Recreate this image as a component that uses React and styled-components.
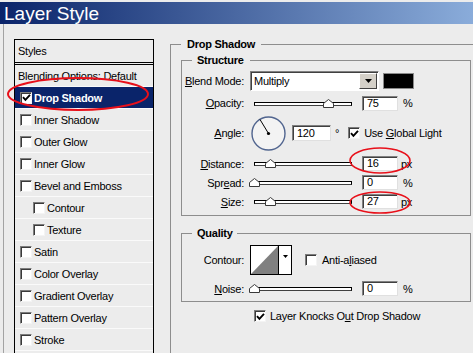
import React from "react";
import styled, { createGlobalStyle } from "styled-components";

const GlobalStyle = createGlobalStyle`
  html, body { margin: 0; padding: 0; background: #ececec; }
  body {
    font-family: "Liberation Sans", Arial, sans-serif;
    font-size: 11px;
    letter-spacing: -0.25px;
    color: #000;
  }
`;

const Window = styled.div`
  position: relative;
  width: 473px;
  height: 353px;
  overflow: hidden;
  padding-top: 2px;
  box-sizing: border-box;
  background: #ececec;
`;

const TitleBar = styled.div`
  height: 22px;
  padding-left: 4px;
  background: linear-gradient(90deg, #0a246a 0%, #8aacda 100%);
  color: #fff;
  font-size: 19px;
  letter-spacing: 0;
  line-height: 23px;
`;

const Body = styled.div`
  display: flex;
  align-items: flex-start;
  height: 329px;
`;

const Sidebar = styled.div`
  flex: none;
  height: 100%;
  box-sizing: border-box;
  margin-left: 3px;
  padding: 15px 0 0 10px;
  border-left: 1px solid #a3a3a3;
`;

const StyleList = styled.div`
  width: 140px;
  height: 360px;
  box-sizing: border-box;
  border: 1px solid #000;
`;

const ListHeader = styled.div`
  height: 22px;
  line-height: 22px;
  padding-left: 3px;
  border-bottom: 3px double #000;
`;

const ListRow = styled.div`
  display: flex;
  align-items: center;
  gap: 2px;
  height: 21px;
  border-bottom: 1px solid #fafafa;
  padding-left: ${(p) => p.$pad}px;
  background: ${(p) => (p.$selected ? "#0a246a" : "transparent")};
  color: ${(p) => (p.$selected ? "#fff" : "#000")};
  font-weight: ${(p) => (p.$selected ? "bold" : "normal")};
  white-space: nowrap;
`;

const Box = styled.span`
  flex: none;
  display: inline-flex;
  align-items: center;
  justify-content: center;
  width: 12px;
  height: 12px;
  box-sizing: border-box;
  background: #fff;
  border: 1px solid;
  border-color: #7c7c7c #f4f4f4 #f4f4f4 #7c7c7c;
  box-shadow: inset 1px 1px 0 #3a3a3a;
`;

const Panel = styled.div`
  flex: none;
  margin-left: 16px;
`;

const Group = styled.fieldset`
  margin: ${(p) => p.$mt || 0}px 0 0 0;
  min-width: 0;
  width: ${(p) => p.$w}px;
  height: ${(p) => (p.$h ? `${p.$h}px` : "auto")};
  box-sizing: border-box;
  padding: ${(p) => p.$pad};
  border: 1px solid #8d8d8d;
`;

const Legend = styled.legend`
  margin-left: ${(p) => p.$ml || 0}px;
  padding: 0 ${(p) => p.$pr}px 0 ${(p) => p.$pl}px;
  font-weight: bold;
  line-height: 13px;
`;

const Row = styled.div`
  display: flex;
  align-items: center;
  height: ${(p) => p.$h || 19}px;
  margin-top: ${(p) => p.$mt || 0}px;
  padding-left: ${(p) => p.$pl || 0}px;
  white-space: nowrap;
`;

const Label = styled.span`
  flex: none;
  width: 62px;
  margin-right: 6px;
  text-align: right;
`;

const Select = styled.div`
  flex: none;
  display: flex;
  align-items: center;
  width: 129px;
  height: 20px;
  box-sizing: border-box;
  background: #fff;
  border: 1px solid;
  border-color: #808080 #fff #fff #808080;
  box-shadow: inset 1px 1px 0 #404040;
  padding: 1px 1px 1px 3px;
`;

const SelectText = styled.span`
  flex: 1;
`;

const DropButton = styled.span`
  flex: none;
  display: flex;
  align-items: center;
  justify-content: center;
  width: 18px;
  height: 100%;
  box-sizing: border-box;
  background: #d4d0c8;
  border: 1px solid;
  border-color: #fff #404040 #404040 #fff;
`;

const Swatch = styled.span`
  flex: none;
  width: 31px;
  height: 16px;
  margin-left: 4px;
  box-sizing: border-box;
  background: #000;
  border: 1px solid #8a8a8a;
`;

const SliderWrap = styled.div`
  position: relative;
  flex: none;
  width: 98px;
  height: 9px;
  margin: 0 10px 0 4px;
`;

const Track = styled.div`
  margin-top: 3px;
  height: 2px;
  background: #fff;
  border: 1px solid #000;
  border-bottom-color: #404040;
`;

const Thumb = styled.svg`
  position: absolute;
  top: 0;
  display: block;
`;

const Field = styled.div`
  flex: none;
  width: ${(p) => p.$w || 36}px;
  height: ${(p) => p.$h || 15}px;
  box-sizing: border-box;
  line-height: ${(p) => (p.$h || 15) - 2}px;
  padding-left: 4px;
  background: #fff;
  border: 1px solid;
  border-color: #808080 #e0e0e0 #e0e0e0 #808080;
  box-shadow: inset 1px 1px 0 #404040;
`;

const Unit = styled.span`
  margin-left: ${(p) => p.$ml}px;
`;

const CheckLabel = styled.span`
  display: inline-flex;
  align-items: center;
  gap: ${(p) => p.$gap || 4}px;
  margin-left: ${(p) => p.$ml || 0}px;
`;

const Dial = styled.svg`
  flex: none;
  display: block;
  margin: 0 6px 0 1px;
`;

const ContourPicker = styled.div`
  flex: none;
  display: flex;
  width: 42px;
  height: 30px;
  box-sizing: border-box;
  border: 1px solid #000;
  background: #fff;
`;

const ContourCurve = styled.svg`
  display: block;
  border-right: 1px solid #000;
`;

const ContourArrow = styled.div`
  flex: 1;
  display: flex;
  justify-content: center;
  padding-top: 9px;
`;

const Overlay = styled.svg`
  position: absolute;
  left: 0;
  top: 0;
  pointer-events: none;
`;

function Check({ checked }) {
  return (
    <Box>
      {checked && (
        <svg width="9" height="9" viewBox="0 0 9 9">
          <polyline points="1,4.2 3.4,6.8 8,1.8" fill="none" stroke="#000" strokeWidth="1.9" />
        </svg>
      )}
    </Box>
  );
}

function Slider({ value }) {
  return (
    <SliderWrap>
      <Track />
      <Thumb width="11" height="9" viewBox="0 0 11 9" style={{ left: value * 0.98 - 5 }}>
        <polygon points="0.5,8.5 0.5,4.5 5.5,0.5 10.5,4.5 10.5,8.5" fill="#fff" stroke="#3a3a3a" />
      </Thumb>
    </SliderWrap>
  );
}

function DownArrow() {
  return (
    <svg width="7" height="4" viewBox="0 0 7 4">
      <polygon points="0,0 7,0 3.5,4" fill="#000" />
    </svg>
  );
}

const styleItems = [
  { name: "Drop Shadow", checked: true, selected: true },
  { name: "Inner Shadow" },
  { name: "Outer Glow" },
  { name: "Inner Glow" },
  { name: "Bevel and Emboss" },
  { name: "Contour", indent: true },
  { name: "Texture", indent: true },
  { name: "Satin" },
  { name: "Color Overlay" },
  { name: "Gradient Overlay" },
  { name: "Pattern Overlay" },
  { name: "Stroke" },
];

export default function App() {
  return (
    <Window>
      <GlobalStyle />
      <TitleBar>Layer Style</TitleBar>
      <Body>
        <Sidebar>
          <StyleList>
            <ListHeader>Styles</ListHeader>
            <ListRow $pad={3}>Blending Options: Default</ListRow>
            {styleItems.map((s) => (
              <ListRow key={s.name} $pad={s.indent ? 18 : 5} $selected={s.selected}>
                <Check checked={s.checked} />
                <span>{s.name}</span>
              </ListRow>
            ))}
            <ListRow $pad={5} />
          </StyleList>
        </Sidebar>

        <Panel>
          <Group $w={310} $h={340} $mt={14} $pad="3px 0 0 10px">
            <Legend $pl={6} $pr={6}>Drop Shadow</Legend>

            <Group $w={290} $pad="4px 0 4px 0">
              <Legend $ml={10} $pl={5} $pr={6}>Structure</Legend>
              <Row $h={20}>
                <Label><u>B</u>lend Mode:</Label>
                <Select>
                  <SelectText>Multiply</SelectText>
                  <DropButton><DownArrow /></DropButton>
                </Select>
                <Swatch />
              </Row>
              <Row $h={20} $mt={2}>
                <Label><u>O</u>pacity:</Label>
                <Slider value={75} />
                <Field>75</Field>
                <Unit $ml={5}>%</Unit>
              </Row>
              <Row $h={34} $mt={3}>
                <Label><u>A</u>ngle:</Label>
                <Dial width="35" height="35" viewBox="0 0 35 35">
                  <circle cx="17.5" cy="17.5" r="16.5" fill="#f3f3f3" stroke="#51658f" strokeWidth="1.4" />
                  <line x1="17.5" y1="17.5" x2="9" y2="3.5" stroke="#000" strokeWidth="1" />
                  <circle cx="17.5" cy="17.5" r="1.6" fill="#000" />
                </Dial>
                <Field $w={39} $h={16}>120</Field>
                <Unit $ml={4}>°</Unit>
                <CheckLabel $ml={9}>
                  <Check checked />
                  <span>Use <u>G</u>lobal Light</span>
                </CheckLabel>
              </Row>
              <Row $mt={4}>
                <Label><u>D</u>istance:</Label>
                <Slider value={16} />
                <Field>16</Field>
                <Unit $ml={3}>px</Unit>
              </Row>
              <Row>
                <Label>Spr<u>e</u>ad:</Label>
                <Slider value={0} />
                <Field>0</Field>
                <Unit $ml={5}>%</Unit>
              </Row>
              <Row>
                <Label><u>S</u>ize:</Label>
                <Slider value={16} />
                <Field>27</Field>
                <Unit $ml={3}>px</Unit>
              </Row>
            </Group>

            <Group $w={290} $mt={11} $pad="5px 0 3px 0">
              <Legend $ml={10} $pl={5} $pr={4}>Quality</Legend>
              <Row $h={30}>
                <Label>Contour:</Label>
                <ContourPicker>
                  <ContourCurve width="27" height="28" viewBox="0 0 27 28">
                    <polygon points="0,28 27,0 27,28" fill="#808080" />
                  </ContourCurve>
                  <ContourArrow>
                    <svg width="5" height="3" viewBox="0 0 5 3">
                      <polygon points="0,0 5,0 2.5,3" fill="#000" />
                    </svg>
                  </ContourArrow>
                </ContourPicker>
                <CheckLabel $ml={13} $gap={5}>
                  <Check />
                  <span>Anti-a<u>l</u>iased</span>
                </CheckLabel>
              </Row>
              <Row $mt={4}>
                <Label><u>N</u>oise:</Label>
                <Slider value={0} />
                <Field>0</Field>
                <Unit $ml={5}>%</Unit>
              </Row>
            </Group>

            <Row $h={16} $mt={6} $pl={73}>
              <CheckLabel>
                <Check checked />
                <span>Layer Knocks O<u>u</u>t Drop Shadow</span>
              </CheckLabel>
            </Row>
          </Group>
        </Panel>
      </Body>

      <Overlay width="473" height="353" viewBox="0 0 473 353">
        <ellipse cx="78" cy="94" rx="70" ry="16" fill="none" stroke="#e8101a" strokeWidth="2" />
        <ellipse cx="380" cy="160.5" rx="30" ry="12.5" fill="none" stroke="#e8101a" strokeWidth="1.6" />
        <ellipse cx="380" cy="202.5" rx="30" ry="10.5" fill="none" stroke="#e8101a" strokeWidth="1.6" />
      </Overlay>
    </Window>
  );
}
